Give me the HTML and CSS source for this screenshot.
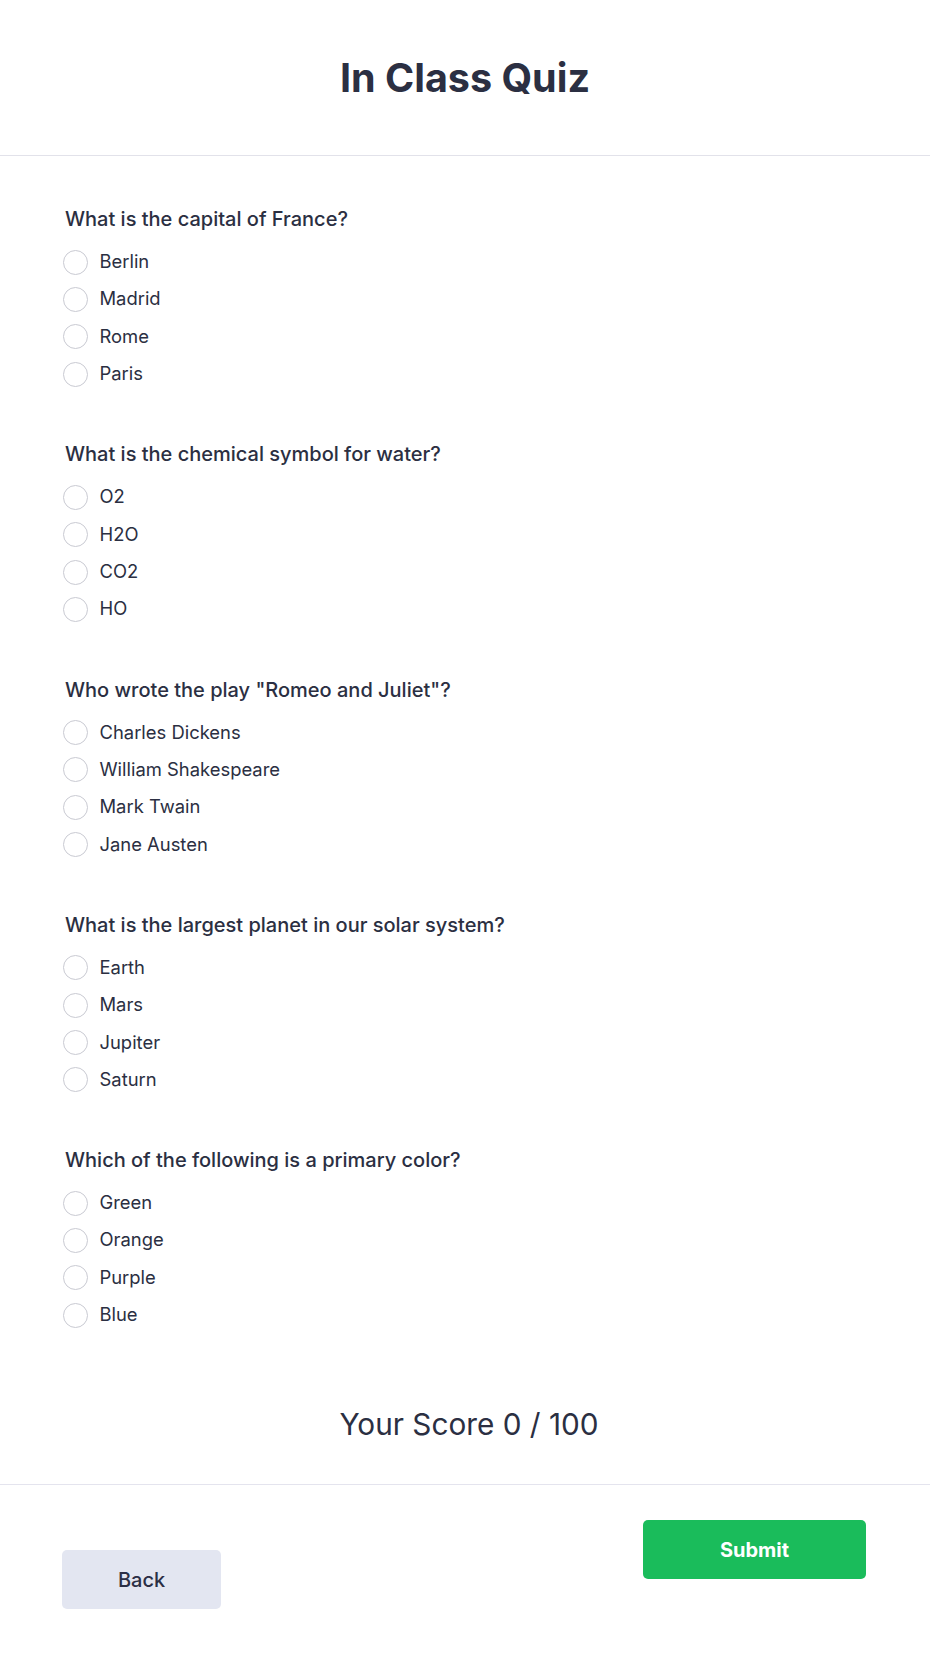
FILE: index.html
```html
<!DOCTYPE html>
<html lang="en">
<head>
<meta charset="utf-8">
<title>In Class Quiz</title>
<link rel="stylesheet" href="styles.css">
</head>
<body>
<div class="page">
  <header class="header">
    <h1 class="title">In Class Quiz</h1>
  </header>
  <main class="quiz">
    <section class="question">
      <h2 class="q-text">What is the capital of France?</h2>
      <div class="options">
        <label class="option"><span class="radio"></span><span class="opt-text">Berlin</span></label>
        <label class="option"><span class="radio"></span><span class="opt-text">Madrid</span></label>
        <label class="option"><span class="radio"></span><span class="opt-text">Rome</span></label>
        <label class="option"><span class="radio"></span><span class="opt-text">Paris</span></label>
      </div>
    </section>
    <section class="question">
      <h2 class="q-text">What is the chemical symbol for water?</h2>
      <div class="options">
        <label class="option"><span class="radio"></span><span class="opt-text">O2</span></label>
        <label class="option"><span class="radio"></span><span class="opt-text">H2O</span></label>
        <label class="option"><span class="radio"></span><span class="opt-text">CO2</span></label>
        <label class="option"><span class="radio"></span><span class="opt-text">HO</span></label>
      </div>
    </section>
    <section class="question">
      <h2 class="q-text">Who wrote the play "Romeo and Juliet"?</h2>
      <div class="options">
        <label class="option"><span class="radio"></span><span class="opt-text">Charles Dickens</span></label>
        <label class="option"><span class="radio"></span><span class="opt-text">William Shakespeare</span></label>
        <label class="option"><span class="radio"></span><span class="opt-text">Mark Twain</span></label>
        <label class="option"><span class="radio"></span><span class="opt-text">Jane Austen</span></label>
      </div>
    </section>
    <section class="question">
      <h2 class="q-text">What is the largest planet in our solar system?</h2>
      <div class="options">
        <label class="option"><span class="radio"></span><span class="opt-text">Earth</span></label>
        <label class="option"><span class="radio"></span><span class="opt-text">Mars</span></label>
        <label class="option"><span class="radio"></span><span class="opt-text">Jupiter</span></label>
        <label class="option"><span class="radio"></span><span class="opt-text">Saturn</span></label>
      </div>
    </section>
    <section class="question">
      <h2 class="q-text">Which of the following is a primary color?</h2>
      <div class="options">
        <label class="option"><span class="radio"></span><span class="opt-text">Green</span></label>
        <label class="option"><span class="radio"></span><span class="opt-text">Orange</span></label>
        <label class="option"><span class="radio"></span><span class="opt-text">Purple</span></label>
        <label class="option"><span class="radio"></span><span class="opt-text">Blue</span></label>
      </div>
    </section>
    <p class="score">Your Score 0 / 100</p>
  </main>
  <footer class="footer">
    <button class="btn btn-back" type="button">Back</button>
    <button class="btn btn-submit" type="button">Submit</button>
  </footer>
</div>
</body>
</html>
```

FILE: styles.css
```css
html, body {
  margin: 0;
  padding: 0;
  background: #ffffff;
}

body {
  font-family: Inter, "Noto Sans", "Liberation Sans", sans-serif;
  color: #2b2f42;
}

.page {
  width: 930px;
  min-height: 1674px;
}

.header {
  height: 156px;
  border-bottom: 1px solid #e2e2ea;
  display: flex;
  justify-content: center;
  box-sizing: border-box;
  padding-top: 54px;
}

.title {
  margin: 0;
  font-size: 39.5px;
  line-height: 48px;
  font-weight: 700;
  color: #2b2f42;
}

.quiz {
  padding: 49px 63px 0 63px;
  display: flex;
  flex-direction: column;
  gap: 53.7px;
}

.question {
  display: flex;
  flex-direction: column;
  gap: 16.6px;
}

.q-text {
  margin: 0;
  font-size: 20px;
  line-height: 28px;
  font-weight: 500;
  color: #2b2f42;
  padding-left: 2px;
}

.options {
  display: flex;
  flex-direction: column;
  gap: 12.33px;
}

.option {
  display: flex;
  align-items: center;
  height: 25px;
  gap: 11.5px;
}

.radio {
  width: 25px;
  height: 25px;
  box-sizing: border-box;
  border: 1.5px solid #c9cad2;
  border-radius: 50%;
  background: #ffffff;
  flex: none;
}

.opt-text {
  font-size: 18.4px;
  line-height: 22px;
  color: #2b2f42;
  margin-top: -2px;
}

.score {
  margin: 25px 0 0 0;
  padding: 0 0 42px 8px;
  text-align: center;
  font-size: 29.75px;
  line-height: 36px;
  font-weight: 400;
  color: #2b2f42;
}

.footer {
  border-top: 1px solid #e4e4ee;
  display: flex;
  justify-content: space-between;
  align-items: flex-start;
  padding: 35px 64px 0 62px;
}

.btn {
  border: none;
  border-radius: 5px;
  font-family: Inter, "Noto Sans", "Liberation Sans", sans-serif;
  font-size: 20px;
  cursor: pointer;
}

.btn-back {
  width: 159px;
  height: 59px;
  margin-top: 30px;
  background: #e3e6f1;
  color: #2b2f45;
  font-weight: 500;
}

.btn-submit {
  width: 223px;
  height: 59px;
  background: #1abc5b;
  color: #ffffff;
  font-weight: 700;
}
```
